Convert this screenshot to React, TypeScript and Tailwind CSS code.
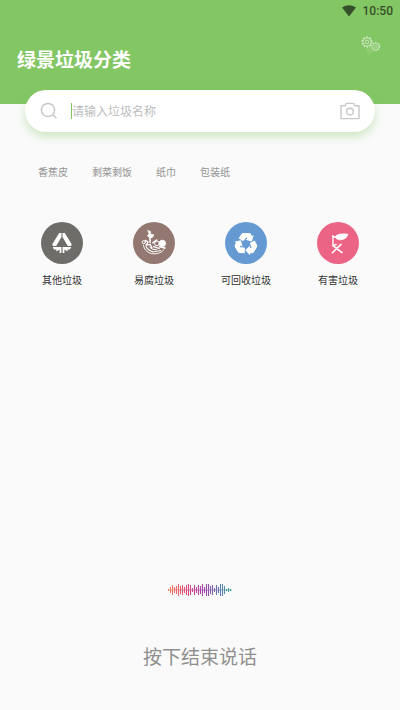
const HOT_WORDS = ["香蕉皮", "剩菜剩饭", "纸巾", "包装纸"];

// Half heights of the bars, left to right
const WAVE = [
  1, 3, 5, 3, 4, 6, 4, 5, 3, 5, 6, 5, 2, 5, 3, 5, 4, 6, 3, 6, 6, 4, 5, 2, 5, 3, 6, 6, 4, 1, 2, 1,
];

function GearsIcon() {
  return (
    <svg viewBox="0 0 20 18" className="h-[18px] w-5" fill="none" stroke="#fff">
      <g opacity="0.6">
        <circle cx="6" cy="6" r="5" strokeWidth="1.3" strokeDasharray="1.9 1.24" />
        <circle cx="6" cy="6" r="4" strokeWidth="0.8" />
        <circle cx="6" cy="6" r="1.7" strokeWidth="0.9" />
      </g>
      <g opacity="0.55">
        <circle cx="14.8" cy="10.6" r="4" strokeWidth="1.2" strokeDasharray="1.5 1.01" />
        <circle cx="14.8" cy="10.6" r="3.2" strokeWidth="0.8" />
        <circle cx="14.8" cy="10.6" r="1.4" strokeWidth="0.8" />
      </g>
      <g opacity="0.3">
        <circle cx="8.5" cy="14.6" r="2.7" strokeWidth="1" strokeDasharray="1 0.7" />
        <circle cx="8.5" cy="14.6" r="1" strokeWidth="0.6" />
      </g>
    </svg>
  );
}

function OtherIcon() {
  return (
    <svg viewBox="0 0 42 42" className="h-full w-full" fill="#fff">
      <path d="M18.2 11H20.5V15L15.2 24H12.4Q10.6 23.6 11.6 21.8Z" />
      <path d="M23.8 11H21.5V15L26.8 24H29.6Q31.4 23.6 30.4 21.8Z" />
      <path d="M11.8 25H20.4V31H18.6V27.4L15.4 29.6V27.4H13Z" />
      <path d="M30.2 25H21.6V31H23.4V27.4L26.6 29.6V27.4H29Z" />
    </svg>
  );
}

function FoodIcon() {
  return (
    <svg
      viewBox="0 0 42 42"
      className="h-full w-full"
      fill="none"
      stroke="#fff"
      strokeLinecap="round"
      strokeLinejoin="round"
    >
      <path d="M15 8.6L17.4 9.4L17.8 12.4L21 12.8L19.4 15.4L16.8 15.8L14.4 13.8L16 12Z" fill="#fff" strokeWidth="0.7" />
      <path d="M16.8 15.4L17.2 20.4M19.8 20.8L23.6 18" strokeWidth="1.5" />
      <circle cx="10.8" cy="20.2" r="1.6" strokeWidth="1" />
      <path d="M12.4 18.4L15.2 20L13 23.2L17.2 22.4L19 26" strokeWidth="1.3" />
      <circle cx="24" cy="21.4" r="2.4" strokeWidth="1" />
      <circle cx="29.4" cy="21.4" r="3.2" fill="#fff" strokeWidth="0.8" />
      <path d="M26.6 24.8L32 26M20.6 24.6L26 26.4" strokeWidth="1.5" />
      <path d="M10.4 23.4Q11.4 29.6 18.4 31.6Q26.6 33 31 27.6" strokeWidth="0.9" />
      <path d="M13 24.6Q15 28.6 19.4 29.6" strokeWidth="1.1" />
      <path d="M16.8 25.4Q19 28 23.6 27.8M20 30L27.6 28.6" strokeWidth="1" />
    </svg>
  );
}

function RecycleIcon() {
  const arm = (
    <>
      <path d="M13.6 16.2L16.4 11.9Q17 11 18.2 11H20.6L23 13.2L18.2 19.2Z" />
      <path d="M19.6 11H24Q25.2 11 25.8 12L27 14L28.8 13L26.8 19.4L20.4 17.8L22.2 16.8Z" />
    </>
  );
  return (
    <svg viewBox="0 0 42 42" className="h-full w-full" fill="#fff">
      <g>{arm}</g>
      <g transform="rotate(120 21 22)">{arm}</g>
      <g transform="rotate(240 21 22)">{arm}</g>
    </svg>
  );
}

function HarmfulIcon() {
  return (
    <svg
      viewBox="0 0 42 42"
      className="h-full w-full"
      fill="none"
      stroke="#fff"
      strokeLinecap="round"
      strokeLinejoin="round"
    >
      <path d="M17.8 15Q21 10.8 31 12.2Q29 18.2 22.4 17.8Q19.4 17.4 17.8 15Z" fill="#fff" strokeWidth="0.7" />
      <path d="M15.4 13.8Q17 14.6 18 15.2M16 14.2V23.6" strokeWidth="1.3" />
      <path d="M16 23.6L25 30.6M24 22.4L15.4 30.8M16 23.4L19 22.6" strokeWidth="1.6" />
    </svg>
  );
}

const CATEGORIES = [
  { label: "其他垃圾", color: "#6f6d6a", icon: <OtherIcon /> },
  { label: "易腐垃圾", color: "#927870", icon: <FoodIcon /> },
  { label: "可回收垃圾", color: "#6499d2", icon: <RecycleIcon /> },
  { label: "有害垃圾", color: "#eb6385", icon: <HarmfulIcon /> },
];

function SearchBar() {
  return (
    <form
      role="search"
      className="mx-[25px] -mt-[14px] flex h-[42px] items-center rounded-full bg-white px-[15px] shadow-[0_5px_8px_rgba(131,198,100,0.35)]"
      onSubmit={(e) => e.preventDefault()}
    >
      <svg viewBox="0 0 18 18" className="h-[18px] w-[18px] shrink-0" fill="none" stroke="#c8c8c8" strokeWidth="1.5" strokeLinecap="round">
        <circle cx="8" cy="8" r="6.6" />
        <path d="M12.8 12.8L16 16" />
      </svg>
      <span className="ml-[13px] h-4 w-px bg-[#83c664]" />
      <input
        type="text"
        aria-label="搜索"
        placeholder="请输入垃圾名称"
        className="min-w-0 flex-1 bg-transparent pt-0.5 text-[12px] leading-4 text-gray-700 outline-none placeholder:text-[#bdbdbd]"
      />
      <button type="button" aria-label="拍照" className="shrink-0">
        <svg viewBox="0 0 20 18" className="h-[18px] w-5" fill="none" stroke="#c8c8c8" strokeWidth="1.4" strokeLinejoin="round">
          <path d="M1 3.8H5L6.4 1.4H13.6L15 3.8H19V16.6H1Z" />
          <circle cx="10" cy="9.6" r="3.4" />
        </svg>
      </button>
    </form>
  );
}

function Waveform() {
  return (
    <svg viewBox="0 0 64 16" className="h-4 w-16" fill="none" stroke="url(#wave)">
      <defs>
        <linearGradient id="wave" gradientUnits="userSpaceOnUse" x1="0" y1="0" x2="64" y2="0">
          <stop offset="0" stopColor="#f5805c" />
          <stop offset="0.3" stopColor="#dc4a7c" />
          <stop offset="0.55" stopColor="#a440ae" />
          <stop offset="0.8" stopColor="#6478ae" />
          <stop offset="1" stopColor="#40aca0" />
        </linearGradient>
      </defs>
      <path
        d={WAVE.map((h, i) => `M${0.5 + i * 2} ${8 - h}V${8 + h}`).join("")}
        strokeWidth="1.1"
      />
      <path d="M0 8L64 8.01" strokeWidth="1" opacity="0.6" />
    </svg>
  );
}

export default function App() {
  return (
    <div className="flex min-h-screen flex-col bg-[#fafafa] font-['Roboto','Noto_Sans_CJK_SC',sans-serif]">
      <header className="h-[104px] bg-[#83c664]">
        {/* Status bar */}
        <div className="flex h-[21px] items-center justify-end gap-[7px] pr-[7px]">
          <svg viewBox="0 0 14 12" className="h-3 w-[14px]" fill="#355028">
            <path d="M0 2.6Q7 -2 14 2.6L7 11.6Z" />
          </svg>
          <span className="text-[12px] leading-4 font-medium text-[#355028]">10:50</span>
        </div>
        <div className="flex items-start justify-between pr-[19px] pl-[17px]">
          <h1 className="pt-[26px] text-[19px] leading-7 font-bold text-white">绿景垃圾分类</h1>
          <button type="button" aria-label="设置" className="mt-[15px]">
            <GearsIcon />
          </button>
        </div>
      </header>

      <SearchBar />

      <div className="mt-[33px] flex gap-6 px-[38px]">
        {HOT_WORDS.map((word) => (
          <button key={word} type="button" className="text-[10px] leading-4 text-[#949494]">
            {word}
          </button>
        ))}
      </div>

      <nav className="mt-[41px] grid grid-cols-4 px-4">
        {CATEGORIES.map((c) => (
          <button key={c.label} type="button" className="flex flex-col items-center gap-[9px]">
            <span
              className="h-[42px] w-[42px] rounded-full"
              style={{ backgroundColor: c.color }}
            >
              {c.icon}
            </span>
            <span className="text-[10px] leading-4 text-[#333]">{c.label}</span>
          </button>
        ))}
      </nav>

      <button type="button" className="mt-auto mb-[38px] flex flex-col items-center gap-[46px] self-center">
        <Waveform />
        <span className="text-[19px] leading-7 text-[#8f8f8f]">按下结束说话</span>
      </button>
    </div>
  );
}
